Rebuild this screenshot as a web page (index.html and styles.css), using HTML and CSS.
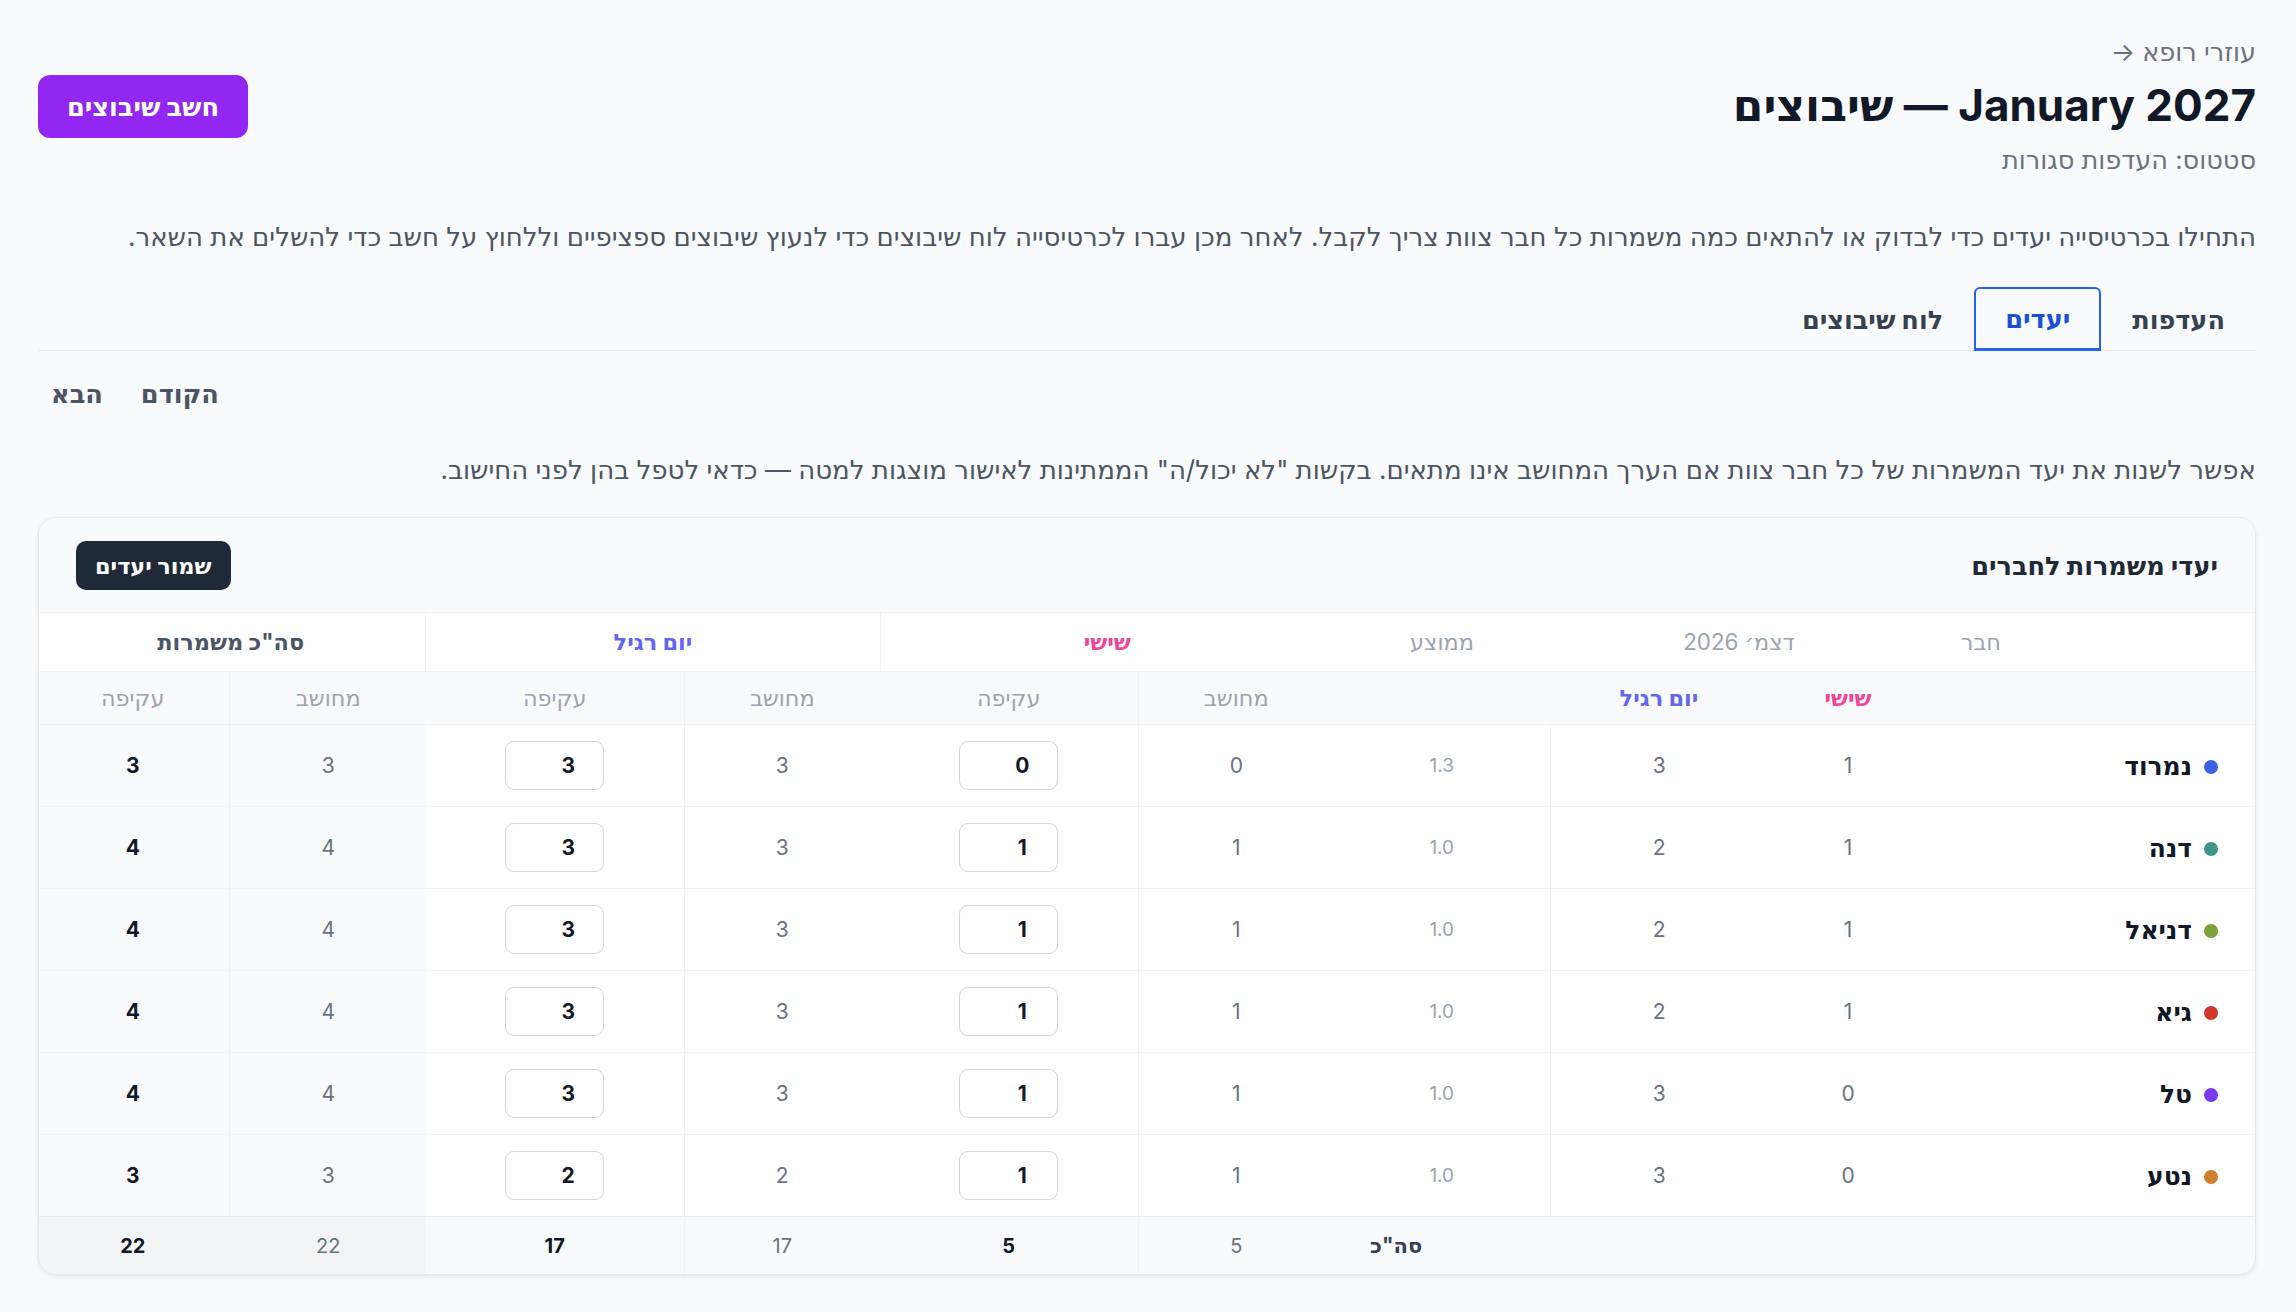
FILE: index.html
```html
<!DOCTYPE html>
<html lang="he" dir="rtl">
<head>
    <meta charset="UTF-8">
    <meta name="viewport" content="width=device-width, initial-scale=1.0">
    <title>שיבוצים — January 2027</title>
    <link rel="stylesheet" href="styles.css">
</head>
<body>
    <div class="page">

        <header class="top">
            <div class="titles">
                <a class="crumb" href="#">עוזרי רופא →</a>
                <h1>January 2027 — שיבוצים</h1>
                <p class="status">סטטוס: העדפות סגורות</p>
            </div>
            <button class="btn-primary">חשב שיבוצים</button>
        </header>

        <p class="intro">התחילו בכרטיסייה יעדים כדי לבדוק או להתאים כמה משמרות כל חבר צוות צריך לקבל. לאחר מכן עברו לכרטיסייה לוח שיבוצים כדי לנעוץ שיבוצים ספציפיים וללחוץ על חשב כדי להשלים את השאר.</p>

        <nav class="tabs">
            <a class="tab" href="#">העדפות</a>
            <a class="tab active" href="#">יעדים</a>
            <a class="tab" href="#">לוח שיבוצים</a>
        </nav>

        <div class="pager">
            <button class="pager-btn">הקודם</button>
            <button class="pager-btn">הבא</button>
        </div>

        <p class="hint">אפשר לשנות את יעד המשמרות של כל חבר צוות אם הערך המחושב אינו מתאים. בקשות "לא יכול/ה" הממתינות לאישור מוצגות למטה — כדאי לטפל בהן לפני החישוב.</p>

        <section class="card">
            <div class="card-head">
                <h2>יעדי משמרות לחברים</h2>
                <button class="btn-dark">שמור יעדים</button>
            </div>

            <table class="targets">
                <colgroup>
                    <col class="c-member">
                    <col class="c-dec-fri">
                    <col class="c-dec-reg">
                    <col class="c-avg">
                    <col class="c-calc">
                    <col class="c-over">
                    <col class="c-calc">
                    <col class="c-over">
                    <col class="c-calc">
                    <col class="c-over">
                </colgroup>
                <thead>
                    <tr class="group-row">
                        <th class="member-h">חבר</th>
                        <th colspan="2">דצמ׳ 2026</th>
                        <th>ממוצע</th>
                        <th colspan="2" class="fri g-end">שישי</th>
                        <th colspan="2" class="reg g-end">יום רגיל</th>
                        <th colspan="2" class="sum-h">סה"כ משמרות</th>
                    </tr>
                    <tr class="sub-row">
                        <th></th>
                        <th class="fri">שישי</th>
                        <th class="reg">יום רגיל</th>
                        <th></th>
                        <th class="split">מחושב</th>
                        <th>עקיפה</th>
                        <th class="split">מחושב</th>
                        <th>עקיפה</th>
                        <th class="split tot">מחושב</th>
                        <th class="tot">עקיפה</th>
                    </tr>
                </thead>
                <tbody id="rows"></tbody>
                <tfoot>
                    <tr>
                        <td colspan="4" class="foot-label">סה"כ</td>
                        <td class="split calc" id="sum-fri-calc"></td>
                        <td class="strong" id="sum-fri"></td>
                        <td class="split calc" id="sum-reg-calc"></td>
                        <td class="strong" id="sum-reg"></td>
                        <td class="split calc tot" id="sum-all-calc"></td>
                        <td class="strong tot" id="sum-all"></td>
                    </tr>
                </tfoot>
            </table>
        </section>

    </div>

    <script>
        const members = [
            { name: 'נמרוד', color: '#3b63e0', decFri: 1, decReg: 3, avg: '1.3', friCalc: 0, fri: 0, regCalc: 3, reg: 3 },
            { name: 'דנה',   color: '#3f9488', decFri: 1, decReg: 2, avg: '1.0', friCalc: 1, fri: 1, regCalc: 3, reg: 3 },
            { name: 'דניאל', color: '#7ba236', decFri: 1, decReg: 2, avg: '1.0', friCalc: 1, fri: 1, regCalc: 3, reg: 3 },
            { name: 'גיא',   color: '#d1362d', decFri: 1, decReg: 2, avg: '1.0', friCalc: 1, fri: 1, regCalc: 3, reg: 3 },
            { name: 'טל',    color: '#7c3aed', decFri: 0, decReg: 3, avg: '1.0', friCalc: 1, fri: 1, regCalc: 3, reg: 3 },
            { name: 'נטע',   color: '#d07d2c', decFri: 0, decReg: 3, avg: '1.0', friCalc: 1, fri: 1, regCalc: 2, reg: 2 }
        ];

        function renderRows() {
            const body = document.getElementById('rows');
            body.innerHTML = '';
            members.forEach(function (m) {
                const tr = document.createElement('tr');
                tr.innerHTML =
                    '<td class="member"><span class="dot" style="background:' + m.color + '"></span>' + m.name + '</td>' +
                    '<td class="calc">' + m.decFri + '</td>' +
                    '<td class="calc dec-end">' + m.decReg + '</td>' +
                    '<td class="avg">' + m.avg + '</td>' +
                    '<td class="split calc">' + m.friCalc + '</td>' +
                    '<td><input class="num" type="text" value="' + m.fri + '"></td>' +
                    '<td class="split calc">' + m.regCalc + '</td>' +
                    '<td><input class="num" type="text" value="' + m.reg + '"></td>' +
                    '<td class="split calc tot">' + (m.friCalc + m.regCalc) + '</td>' +
                    '<td class="strong tot">' + (m.fri + m.reg) + '</td>';
                body.appendChild(tr);
            });
        }

        function sum(key) {
            return members.reduce(function (a, m) { return a + m[key]; }, 0);
        }

        function renderTotals() {
            document.getElementById('sum-fri-calc').innerText = sum('friCalc');
            document.getElementById('sum-fri').innerText = sum('fri');
            document.getElementById('sum-reg-calc').innerText = sum('regCalc');
            document.getElementById('sum-reg').innerText = sum('reg');
            document.getElementById('sum-all-calc').innerText = sum('friCalc') + sum('regCalc');
            document.getElementById('sum-all').innerText = sum('fri') + sum('reg');
        }

        renderRows();
        renderTotals();
    </script>
</body>
</html>
```

FILE: styles.css
```css
body {
    margin: 0;
    background: #f9fafb;
    font-family: Inter, "DejaVu Sans", sans-serif;
    color: #111827;
}

.page {
    padding: 37px 40px 36px 38px;
}

/* page header */

.top {
    display: flex;
    justify-content: space-between;
    align-items: center;
}

.crumb {
    display: inline-block;
    font-size: 25.6px;
    line-height: 30px;
    color: #6b7280;
    text-decoration: none;
}

.top h1 {
    margin: 10px 0 12px;
    font-size: 44px;
    font-weight: 700;
    line-height: 56px;
    color: #111827;
}

.status {
    margin: 0;
    font-size: 25.6px;
    line-height: 30px;
    color: #6b7280;
}

.btn-primary {
    font-family: inherit;
    background: #9127f0;
    color: #fff;
    border: none;
    border-radius: 12px;
    height: 63px;
    padding: 0 29px;
    font-size: 25.6px;
    font-weight: 700;
    cursor: pointer;
}

.intro {
    margin: 46px 0 0;
    font-size: 26px;
    line-height: 32px;
    color: #4b5563;
}

/* tabs */

.tabs {
    display: flex;
    margin-top: 34px;
    border-bottom: 1px solid #e5e7eb;
}

.tab {
    height: 64px;
    box-sizing: border-box;
    display: flex;
    align-items: center;
    padding: 0 31px;
    font-size: 25.6px;
    font-weight: 700;
    color: #374151;
    text-decoration: none;
    margin-bottom: -1px;
}

.tab.active {
    color: #1d4ed8;
    border: 2px solid #2563eb;
    border-bottom-width: 3px;
    border-radius: 6px 6px 0 0;
    padding: 0 29px;
}

.pager {
    display: flex;
    justify-content: flex-end;
    gap: 12px;
    margin-top: 27px;
}

.pager-btn {
    font-family: inherit;
    background: none;
    border: none;
    padding: 0 13px;
    font-size: 25.6px;
    line-height: 32px;
    font-weight: 700;
    color: #4b5563;
    cursor: pointer;
}

.hint {
    margin: 44px 0 0;
    font-size: 26px;
    line-height: 32px;
    color: #4b5563;
}

/* targets card */

.card {
    margin-top: 31px;
    background: #fff;
    border: 1px solid #e5e7eb;
    border-radius: 18px;
    box-shadow: 0 2px 5px rgba(0, 0, 0, 0.08);
    overflow: hidden;
}

.card-head {
    display: flex;
    justify-content: space-between;
    align-items: center;
    height: 94px;
    padding: 0 37px;
    background: #f9fafb;
    border-bottom: 1px solid #f0f1f3;
}

.card-head h2 {
    margin: 0;
    font-size: 25.6px;
    font-weight: 700;
    color: #1f2937;
}

.btn-dark {
    font-family: inherit;
    background: #1f2937;
    color: #fff;
    border: none;
    border-radius: 10px;
    height: 49px;
    padding: 0 19px;
    font-size: 22.4px;
    font-weight: 700;
    cursor: pointer;
}

.targets {
    width: 100%;
    border-collapse: collapse;
    table-layout: fixed;
}

.c-member { width: 327px; }
.c-dec-fri { width: 160px; }
.c-dec-reg { width: 218px; }
.c-avg { width: 216px; }
.c-calc { width: 196px; }
.c-over { width: 258px; }
.targets col:last-child { width: 194px; }

.targets th,
.targets td {
    text-align: center;
    padding: 0;
    line-height: 28px;
}

.group-row th {
    height: 58px;
    background: #fff;
    font-size: 22.4px;
    font-weight: 400;
    color: #9ca3af;
    border-bottom: 1px solid #f0f1f3;
}

.group-row .member-h {
    text-align: right;
    padding-right: 254px;
}

.group-row .g-end {
    border-left: 1px solid #f0f1f3;
}

.group-row .sum-h {
    font-weight: 700;
    color: #4b5563;
}

.sub-row th {
    height: 52px;
    background: #f9fafb;
    font-size: 22.4px;
    font-weight: 400;
    color: #9ca3af;
    border-bottom: 1px solid #f0f1f3;
}

.targets th.fri { color: #ec4899; font-weight: 700; }
.targets th.reg { color: #6366f1; font-weight: 700; }

.targets .split {
    border-left: 1px solid #f0f1f3;
}

.targets tbody td {
    height: 81px;
    font-size: 21px;
    color: #6b7280;
    border-bottom: 1px solid #f3f4f6;
}

.targets tbody tr:last-child td {
    border-bottom: none;
}

.targets .dec-end {
    border-left: 1px solid #f0f1f3;
}

.targets .member {
    text-align: right;
    padding-right: 37px;
    font-size: 25px;
    font-weight: 700;
    color: #111827;
}

.dot {
    display: inline-block;
    width: 14px;
    height: 14px;
    border-radius: 50%;
    margin-left: 12px;
    vertical-align: 1px;
}

.targets .avg {
    font-size: 19px;
    color: #9ca3af;
}

.targets .strong {
    font-weight: 700;
    color: #111827;
}

.targets td.tot,
.targets th.tot {
    background: #f9fafb;
}

.num {
    box-sizing: border-box;
    width: 99px;
    height: 49px;
    border: 1px solid #d1d5db;
    border-radius: 9px;
    background: #fff;
    font-family: inherit;
    font-size: 21px;
    font-weight: 700;
    color: #111827;
    text-align: center;
    padding: 0 0 0 27px;
}

.targets tfoot td {
    height: 57px;
    background: #f9fafb;
    font-size: 20px;
    border-top: 1px solid #e5e7eb;
}

.targets tfoot .calc {
    color: #6b7280;
}

.targets tfoot td.tot {
    background: #f3f4f6;
}

.targets .foot-label {
    text-align: left;
    padding-left: 36px;
    font-size: 21px;
    font-weight: 700;
    color: #374151;
}
```
